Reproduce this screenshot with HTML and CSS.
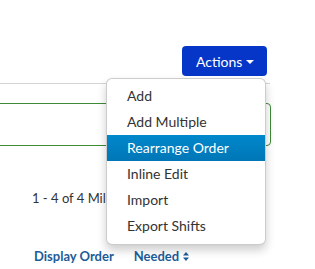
FILE: index.html
```html
<!DOCTYPE html>
<html>
<head>
    <meta charset="UTF-8">
    <meta name="viewport" content="width=device-width, initial-scale=1.0">
    <title>Shifts</title>
    <link rel="stylesheet" href="styles.css">
</head>
<body>
    <div class="page">
        <div class="toolbar">
            <div class="actions">
                <button class="actions__btn">Actions <span class="caret"></span></button>
                <ul class="actions__menu">
                    <li><a href="#">Add</a></li>
                    <li><a href="#">Add Multiple</a></li>
                    <li class="active"><a href="#">Rearrange Order</a></li>
                    <li><a href="#">Inline Edit</a></li>
                    <li><a href="#">Import</a></li>
                    <li><a href="#">Export Shifts</a></li>
                </ul>
            </div>
        </div>
        <div class="divider"></div>
        <div class="filter-box"></div>
        <div class="pager">1 - 4 of 4 Milestones</div>
        <div class="table-head">
            <a class="table-head__link" href="#">Display Order</a>
            <a class="table-head__link" href="#">Needed
                <svg class="sort-icon" width="6" height="9" viewBox="0 0 6 9">
                    <path d="M0 3.6 L3 0 L6 3.6 Z M0 5.4 L3 9 L6 5.4 Z" fill="#1d5c98"/>
                </svg>
            </a>
        </div>
    </div>
</body>
</html>
```

FILE: styles.css
```css
*, *::before, *::after {
    box-sizing: border-box;
}
body {
    margin: 0;
    background: #fff;
    font-family: 'Lato', 'Liberation Sans', sans-serif;
    color: #333;
    overflow: hidden;
}
.page {
    width: 315px;
    height: 269px;
}
.toolbar {
    display: flex;
    justify-content: flex-end;
    padding: 46px 48px 0 0;
    height: 83px;
}
.actions {
    position: relative;
}
.actions__btn {
    display: flex;
    align-items: center;
    height: 30px;
    width: 85px;
    padding: 0 0 0 14px;
    border: none;
    border-radius: 4px;
    background-color: #0536c8;
    color: #fff;
    font-family: 'Lato', 'Liberation Sans', sans-serif;
    font-size: 14px;
}
.caret {
    display: inline-block;
    margin-left: 4px;
    margin-top: 1px;
    border-top: 4px solid #fff;
    border-left: 4px solid transparent;
    border-right: 4px solid transparent;
}
.actions__menu {
    position: absolute;
    top: 32px;
    right: 1px;
    z-index: 5;
    width: 160px;
    margin: 0;
    padding: 4px 0 5px;
    list-style: none;
    background: #fff;
    border: 1px solid rgba(0, 0, 0, 0.2);
    border-radius: 6px;
    box-shadow: 0 5px 10px rgba(0, 0, 0, 0.2);
}
.actions__menu a {
    display: block;
    height: 26px;
    line-height: 26px;
    padding: 0 20px;
    color: #333;
    font-size: 14px;
    text-decoration: none;
    white-space: nowrap;
}
.actions__menu .active a {
    color: #fff;
    background-image: linear-gradient(#0088cc, #0076b6);
}
.divider {
    width: 270px;
    height: 1px;
    background: #d4d4d4;
}
.filter-box {
    width: 281px;
    height: 43px;
    margin: 19px 0 0 -10px;
    border: 1px solid #3d8b37;
    border-radius: 4px;
}
.pager {
    margin: 43px 0 0 32px;
    font-size: 13px;
    line-height: 18px;
    color: #333;
}
.table-head {
    display: flex;
    gap: 20px;
    margin: 39px 0 0 34px;
}
.table-head__link {
    display: flex;
    align-items: center;
    gap: 4px;
    font-size: 13px;
    line-height: 20px;
    font-weight: bold;
    color: #1d5c98;
    text-decoration: none;
}
```
